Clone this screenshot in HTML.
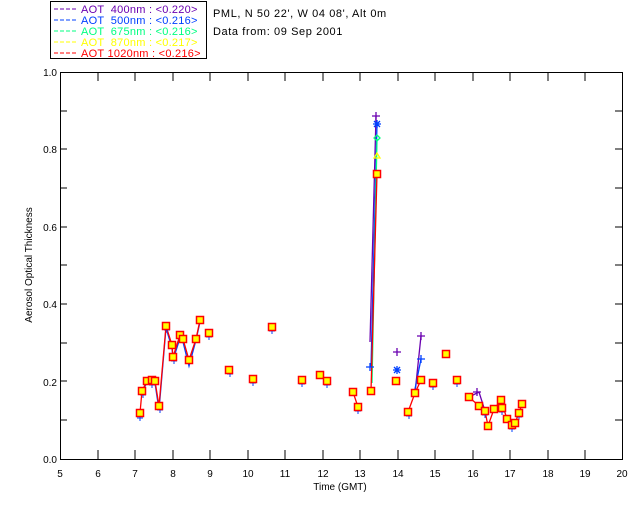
<!DOCTYPE html>
<html><head><style>html,body{margin:0;padding:0;background:#fff}svg{display:block}text{font-family:"Liberation Sans",sans-serif;font-size:10px}.big{font-size:11px;letter-spacing:0.6px}.leg{font-size:11px;letter-spacing:0.25px}</style></head>
<body>
<svg width="640" height="512" viewBox="0 0 640 512" xmlns="http://www.w3.org/2000/svg">
<rect width="640" height="512" fill="#fff"/>
<rect x="50.5" y="1.5" width="156" height="57" fill="none" stroke="#000"/>
<g stroke-width="1" stroke-dasharray="4,2">
<line x1="54" y1="9" x2="76" y2="9" stroke="#6a00b0"/>
<line x1="54" y1="20" x2="76" y2="20" stroke="#0040ff"/>
<line x1="54" y1="31" x2="76" y2="31" stroke="#00ff80"/>
<line x1="54" y1="42" x2="76" y2="42" stroke="#ffff00"/>
<line x1="54" y1="53" x2="76" y2="53" stroke="#ff0000"/>
</g>
<text class="leg" x="81" y="13" fill="#6a00b0" xml:space="preserve">AOT  400nm : &lt;0.220&gt;</text>
<text class="leg" x="81" y="24" fill="#0040ff" xml:space="preserve">AOT  500nm : &lt;0.216&gt;</text>
<text class="leg" x="81" y="35" fill="#00ff80" xml:space="preserve">AOT  675nm : &lt;0.216&gt;</text>
<text class="leg" x="81" y="46" fill="#ffff00" xml:space="preserve">AOT  870nm : &lt;0.217&gt;</text>
<text class="leg" x="81" y="57" fill="#ff0000" xml:space="preserve">AOT 1020nm : &lt;0.216&gt;</text>
<text class="big" x="213" y="17" fill="#000">PML, N 50 22', W 04 08', Alt 0m</text>
<text class="big" x="213" y="35" fill="#000">Data from: 09 Sep 2001</text>
<rect x="60.5" y="72.5" width="562" height="387" fill="none" stroke="#000"/>
<g stroke="#000">
<path d="M98,72v9M135,72v9M173,72v9M210,72v9M248,72v9M285,72v9M323,72v9M360,72v9M398,72v9M435,72v9M473,72v9M510,72v9M548,72v9M585,72v9"/>
<path d="M98,459v-9M135,459v-9M173,459v-9M210,459v-9M248,459v-9M285,459v-9M323,459v-9M360,459v-9M398,459v-9M435,459v-9M473,459v-9M510,459v-9M548,459v-9M585,459v-9"/>
<path d="M60,420h7M60,381h7M60,343h7M60,304h7M60,265h7M60,227h7M60,188h7M60,149h7M60,111h7"/>
<path d="M622,420h-7M622,381h-7M622,343h-7M622,304h-7M622,265h-7M622,227h-7M622,188h-7M622,149h-7M622,111h-7"/>
</g>
<g fill="#000" text-anchor="end">
<text x="57" y="463">0.0</text><text x="57" y="386">0.2</text><text x="57" y="308">0.4</text><text x="57" y="231">0.6</text><text x="57" y="153">0.8</text><text x="57" y="76">1.0</text>
</g>
<g fill="#000" text-anchor="middle">
<text x="60" y="477">5</text><text x="98" y="477">6</text><text x="135" y="477">7</text><text x="173" y="477">8</text><text x="210" y="477">9</text><text x="248" y="477">10</text><text x="285" y="477">11</text><text x="323" y="477">12</text><text x="360" y="477">13</text><text x="398" y="477">14</text><text x="435" y="477">15</text><text x="473" y="477">16</text><text x="510" y="477">17</text><text x="548" y="477">18</text><text x="585" y="477">19</text><text x="622" y="477">20</text>
<text x="340" y="490">Time (GMT)</text>
<text transform="translate(32,265) rotate(-90)">Aerosol Optical Thickness</text>
</g>
<g fill="none" stroke-width="1.3">
<polyline stroke="#0040ff" points="142,391 147,383 152,382 155,383 159,410 166,328 172,348 173,360 180,338 183,342 189,366 196,340 200,322"/>
<polyline stroke="#6a00b0" points="370,342 376,116"/>
<polyline stroke="#0040ff" points="371,367 377,124"/>
<polyline stroke="#00ff80" points="372,383 377,139"/>
<polyline stroke="#6a00b0" points="415,393 421,336"/>
<polyline stroke="#0040ff" points="414,394 421,359"/>
<polyline stroke="#6a00b0" points="469,397 479,392 485,411"/>
<polyline stroke="#ff0000" points="140,413 142,391 147,381 152,380 155,381 159,406 166,326 172,345 173,357 180,335 183,339 189,360 196,339 200,320"/>
<polyline stroke="#ff0000" points="353,392 358,407"/>
<polyline stroke="#ff0000" points="371,391 377,174"/>
<polyline stroke="#ff0000" points="408,412 415,393 421,380"/>
<polyline stroke="#ff0000" points="469,397 479,406 485,411 488,426 494,409 501,400 507,419 512,425 515,423 519,413 522,404"/>
</g>
<g fill="none" stroke-width="1.3">
<path stroke="#6a00b0" d="M372,116h8M376,112v8M393,352h8M397,348v8M417,336h8M421,332v8M473,392h8M477,388v8"/>
<path stroke="#0040ff" d="M373,124h8M377,120v8M374,121l6,6M380,121l-6,6M366,367h8M370,363v8M393,370h8M397,366v8M394,367l6,6M400,367l-6,6M417,359h8M421,355v8"/>
<path stroke="#00ff80" d="M377,135l3,3-3,3-3-3z"/>
<path stroke="#ffff00" d="M374,158l3,-5 3,5z"/>
</g>
<g stroke="#0040ff" stroke-width="1" fill="none">
<path d="M137,418h6M140,415v6M140,395h6M143,392v6M149,385h6M152,382v6M157,410h6M160,407v6M164,330h6M167,327v6M171,361h6M174,358v6M178,339h6M181,336v6M186,363h6M189,360v6M197,320h6M200,317v6M206,337h6M209,334v6M227,374h6M230,371v6M250,383h6M253,380v6M269,331h6M272,328v6M299,384h6M302,381v6M324,385h6M327,382v6M355,411h6M358,408v6M406,416h6M409,413v6M430,387h6M433,384v6M454,384h6M457,381v6M482,415h6M485,412v6M499,412h6M502,409v6M509,429h6M512,426v6M516,417h6M519,414v6"/>
</g>
<g stroke="#ff0000" stroke-width="1.5" fill="#ffff00">
<rect x="136.5" y="409.5" width="7" height="7"/><rect x="138.5" y="387.5" width="7" height="7"/><rect x="143.5" y="377.5" width="7" height="7"/><rect x="148.5" y="376.5" width="7" height="7"/><rect x="151.5" y="377.5" width="7" height="7"/><rect x="155.5" y="402.5" width="7" height="7"/><rect x="162.5" y="322.5" width="7" height="7"/><rect x="168.5" y="341.5" width="7" height="7"/><rect x="169.5" y="353.5" width="7" height="7"/><rect x="176.5" y="331.5" width="7" height="7"/><rect x="179.5" y="335.5" width="7" height="7"/><rect x="185.5" y="356.5" width="7" height="7"/><rect x="192.5" y="335.5" width="7" height="7"/><rect x="196.5" y="316.5" width="7" height="7"/><rect x="205.5" y="329.5" width="7" height="7"/><rect x="225.5" y="366.5" width="7" height="7"/><rect x="249.5" y="375.5" width="7" height="7"/><rect x="268.5" y="323.5" width="7" height="7"/><rect x="298.5" y="376.5" width="7" height="7"/><rect x="316.5" y="371.5" width="7" height="7"/><rect x="323.5" y="377.5" width="7" height="7"/><rect x="349.5" y="388.5" width="7" height="7"/><rect x="354.5" y="403.5" width="7" height="7"/><rect x="367.5" y="387.5" width="7" height="7"/><rect x="373.5" y="170.5" width="7" height="7"/><rect x="392.5" y="377.5" width="7" height="7"/><rect x="404.5" y="408.5" width="7" height="7"/><rect x="411.5" y="389.5" width="7" height="7"/><rect x="417.5" y="376.5" width="7" height="7"/><rect x="429.5" y="379.5" width="7" height="7"/><rect x="442.5" y="350.5" width="7" height="7"/><rect x="453.5" y="376.5" width="7" height="7"/><rect x="465.5" y="393.5" width="7" height="7"/><rect x="475.5" y="402.5" width="7" height="7"/><rect x="481.5" y="407.5" width="7" height="7"/><rect x="484.5" y="422.5" width="7" height="7"/><rect x="490.5" y="405.5" width="7" height="7"/><rect x="497.5" y="396.5" width="7" height="7"/><rect x="498.5" y="404.5" width="7" height="7"/><rect x="503.5" y="415.5" width="7" height="7"/><rect x="508.5" y="421.5" width="7" height="7"/><rect x="511.5" y="419.5" width="7" height="7"/><rect x="515.5" y="409.5" width="7" height="7"/><rect x="518.5" y="400.5" width="7" height="7"/>
</g>
</svg>
</body></html>
